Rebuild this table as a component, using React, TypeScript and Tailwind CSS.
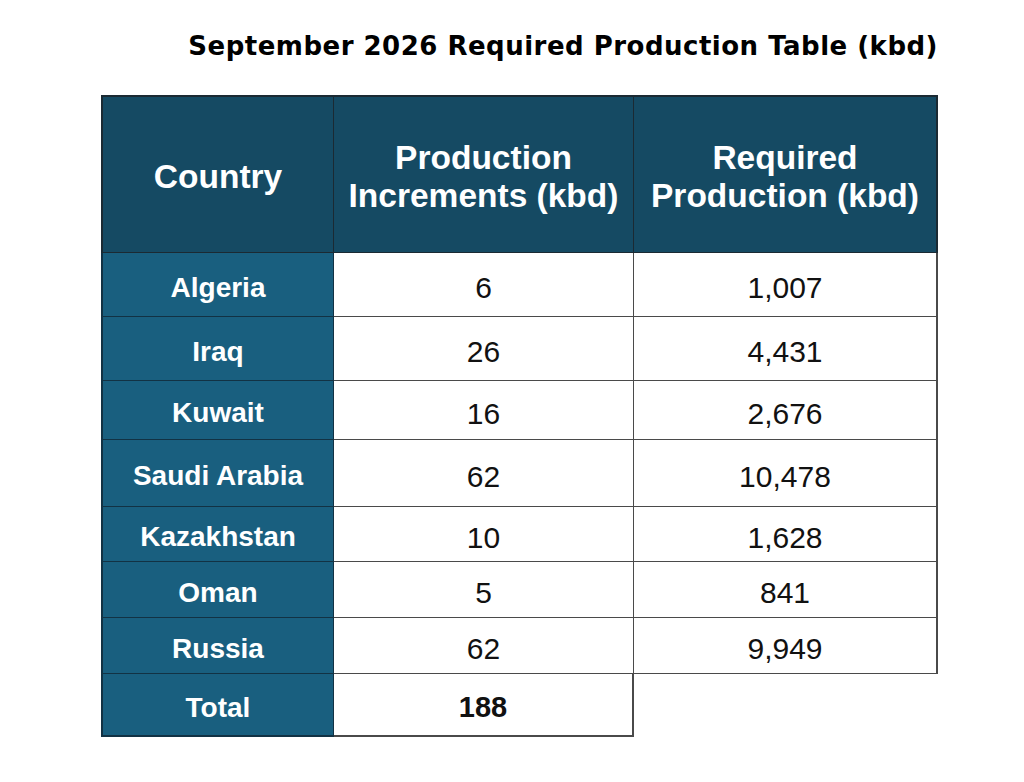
const rows = [
  { country: "Algeria", inc: "6", req: "1,007", h: "h-[64px]" },
  { country: "Iraq", inc: "26", req: "4,431", h: "h-[64px]" },
  { country: "Kuwait", inc: "16", req: "2,676", h: "h-[59px]" },
  { country: "Saudi Arabia", inc: "62", req: "10,478", h: "h-[67px]" },
  { country: "Kazakhstan", inc: "10", req: "1,628", h: "h-[55px]" },
  { country: "Oman", inc: "5", req: "841", h: "h-[56px]" },
  { country: "Russia", inc: "62", req: "9,949", h: "h-[56px]" },
];

const App = () => {
  return (
    <div className="w-[1024px] h-[782px] bg-white font-['Liberation_Sans',Arial,sans-serif]">
      <div className="ml-[101px] w-[837px] pt-[30px]">
        <h1 className="text-right font-['DejaVu_Sans',sans-serif] font-bold text-[26px] leading-[32px] text-black tracking-[0.019em]">
          September 2026 Required Production Table (kbd)
        </h1>

        <div className="mt-[33px] grid grid-cols-[233px_300px_304px]">
          {/* header */}
          <div className="h-[158px] pt-1 bg-[#154a63] border-l-2 border-t-2 border-r border-b border-[#1b2a33] flex items-center justify-center text-white font-bold text-[33.5px] leading-[38px] text-center">
            Country
          </div>
          <div className="h-[158px] pt-1 bg-[#154a63] border-t-2 border-r border-b border-[#1b2a33] flex items-center justify-center text-white font-bold text-[33.5px] leading-[38px] text-center">
            Production
            <br />
            Increments (kbd)
          </div>
          <div className="h-[158px] pt-1 bg-[#154a63] border-t-2 border-r-2 border-b border-[#1b2a33] flex items-center justify-center text-white font-bold text-[33.5px] leading-[38px] text-center">
            Required
            <br />
            Production (kbd)
          </div>

          {rows.map((r) => (
            <div key={r.country} className="contents">
              <div className={`${r.h} pt-[6px] bg-[#195f7f] border-l-2 border-r border-b border-[#123244] flex items-center justify-center text-white font-bold text-[28px]`}>
                {r.country}
              </div>
              <div className={`${r.h} pt-[6px] bg-white border-r border-b border-[#4a4a4a] flex items-center justify-center text-[#111] text-[30px]`}>
                {r.inc}
              </div>
              <div className={`${r.h} pt-[6px] bg-white border-r-2 border-b border-[#4a4a4a] flex items-center justify-center text-[#111] text-[30px]`}>
                {r.req}
              </div>
            </div>
          ))}

          {/* total */}
          <div className="h-[63px] pt-[6px] bg-[#195f7f] border-l-2 border-r border-b-2 border-[#123244] flex items-center justify-center text-white font-bold text-[28px]">
            Total
          </div>
          <div className="h-[63px] pt-[6px] bg-white border-r-2 border-b-2 border-[#4a4a4a] flex items-center justify-center text-[#111] font-bold text-[29px]">
            188
          </div>
          <div className="h-[63px]" />
        </div>
      </div>
    </div>
  );
};

export default App;
